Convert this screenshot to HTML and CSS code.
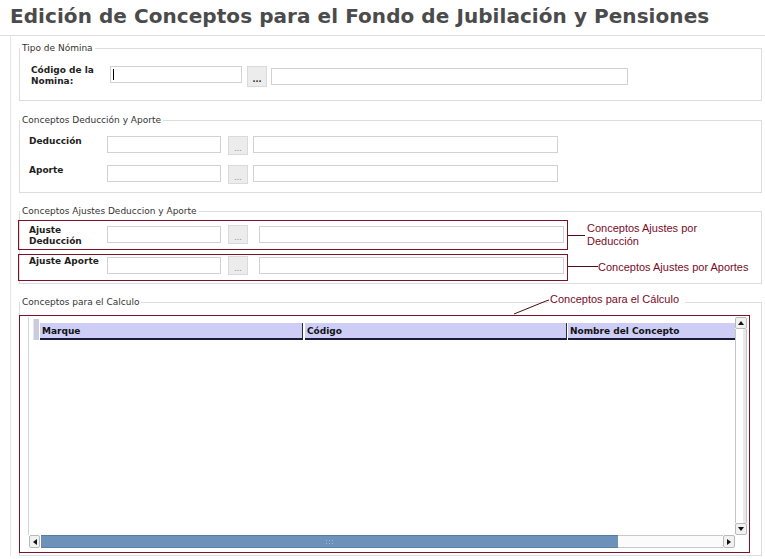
FILE: index.html
```html
<!DOCTYPE html>
<html lang="es">
<head>
    <meta charset="UTF-8">
    <meta name="viewport" content="width=device-width, initial-scale=1.0">
    <title>Edición de Conceptos</title>
    <link rel="stylesheet" href="styles.css">
</head>
<body>
    <h1 class="page-title">Edición de Conceptos para el Fondo de Jubilación y Pensiones</h1>

    <div class="page">
        <fieldset class="group group-nomina">
            <legend>Tipo de Nómina</legend>
            <div class="row row-nomina">
                <label class="row-label">Código de la<br>Nomina:</label>
                <span class="caret-wrap"><input type="text" class="field field-code"></span>
                <button class="pick pick-strong">...</button>
                <input type="text" class="field field-wide">
            </div>
        </fieldset>

        <fieldset class="group">
            <legend>Conceptos Deducción y Aporte</legend>
            <div class="row row-plain">
                <label class="row-label">Deducción</label>
                <input type="text" class="field field-code">
                <button class="pick">...</button>
                <input type="text" class="field field-name">
            </div>
            <div class="row row-plain">
                <label class="row-label">Aporte</label>
                <input type="text" class="field field-code">
                <button class="pick">...</button>
                <input type="text" class="field field-name">
            </div>
        </fieldset>

        <fieldset class="group group-adjust">
            <legend>Conceptos Ajustes Deduccion y Aporte</legend>
            <div class="adj-row">
                <div class="adj-box adj-box-tall">
                    <label class="row-label">Ajuste<br>Deducción</label>
                    <input type="text" class="field field-code">
                    <button class="pick">...</button>
                    <input type="text" class="field field-name">
                </div>
                <span class="lead"></span>
                <span class="note">Conceptos Ajustes por<br>Deducción</span>
            </div>
            <div class="adj-row">
                <div class="adj-box adj-box-short">
                    <label class="row-label">Ajuste Aporte</label>
                    <input type="text" class="field field-code">
                    <button class="pick">...</button>
                    <input type="text" class="field field-name">
                </div>
                <span class="lead lead-long"></span>
                <span class="note note-flush">Conceptos Ajustes por Aportes</span>
            </div>
        </fieldset>

        <fieldset class="group group-calc">
            <legend>Conceptos para el Calculo</legend>
            <div class="calc-box">
                <span class="calc-note">Conceptos para el Cálculo</span>
                <svg class="calc-pointer" width="42" height="17" viewBox="0 0 42 17">
                    <polyline points="4,15 36,2 39,1" fill="none" stroke="#4a0d17" stroke-width="1"/>
                </svg>

                <div class="grid">
                    <div class="grid-main">
                        <div class="grid-body">
                            <div class="grid-head">
                                <span class="head-stub"></span>
                                <span class="head-cell head-mark">Marque</span>
                                <span class="head-cell head-code">Código</span>
                                <span class="head-cell head-name">Nombre del Concepto</span>
                            </div>
                        </div>
                        <div class="vscroll">
                            <span class="sb-btn"><span class="tri tri-up"></span></span>
                            <span class="vtrack"></span>
                            <span class="sb-btn"><span class="tri tri-down"></span></span>
                        </div>
                    </div>
                    <div class="grid-foot">
                        <div class="hscroll">
                            <span class="sb-btn sb-btn-left"><span class="tri tri-left"></span></span>
                            <span class="hthumb"><span class="grip"></span></span>
                            <span class="htrack"></span>
                            <span class="sb-btn"><span class="tri tri-right"></span></span>
                        </div>
                        <span class="corner"></span>
                    </div>
                </div>
            </div>
        </fieldset>
    </div>
</body>
</html>
```

FILE: styles.css
```css
body {
    margin: 0;
    font-family: "DejaVu Sans", Verdana, sans-serif;
    font-size: 9px;
    color: #222;
    background-color: #fff;
}

.page-title {
    margin: 0;
    height: 36px;
    box-sizing: border-box;
    padding: 3px 10px 0;
    border-bottom: 1px solid #dedede;
    font-size: 20px;
    line-height: 26px;
    letter-spacing: 0.06px;
    color: #4b4b4b;
    white-space: nowrap;
}

.page {
    margin-left: 10px;
    border-left: 1px solid #e6e6e6;
    padding: 7px 3px 0 8px;
}

/* fieldsets */
.group {
    margin: 0 0 13px;
    padding: 0 0 8px;
    border: 1px solid #dcdcdc;
    min-width: 0;
}

.group legend {
    margin-left: 0;
    padding: 0 2px;
    font-size: 9px;
    line-height: 11px;
    color: #333;
}

.group-nomina {
    margin-bottom: 14px;
    padding-bottom: 13px;
}

.group-adjust {
    padding-bottom: 2px;
}

.group-calc {
    margin-bottom: 0;
    padding-bottom: 2px;
}

/* rows */
.row {
    display: flex;
    align-items: flex-start;
}

.row-nomina {
    padding: 11px 0 0 11px;
}

.row-nomina .row-label {
    width: 79px;
    line-height: 11px;
}

.row-plain {
    height: 19px;
    padding-left: 9px;
    margin-top: 10px;
}

.row-plain + .row-plain {
    margin-top: 10px;
}

.row-label {
    flex: none;
    width: 78px;
    font-weight: bold;
    line-height: 10px;
    color: #1e1e1e;
}

.field {
    flex: none;
    height: 17px;
    margin: 0;
    padding: 0 3px;
    box-sizing: border-box;
    border: 1px solid #d2d2d2;
    background-color: #fff;
    font-family: inherit;
    font-size: 9px;
}

.field-code {
    width: 114px;
}

.field-name {
    width: 305px;
    margin-left: 5px;
}

.row-nomina .field-code {
    width: 132px;
    margin-top: 1px;
}

.field-wide {
    width: 357px;
    margin-top: 3px;
    margin-left: 4px;
}

.caret-wrap {
    position: relative;
    display: block;
}

.caret-wrap::after {
    content: "";
    position: absolute;
    left: 3px;
    top: 4px;
    width: 1px;
    height: 11px;
    background-color: #000;
}

.pick {
    flex: none;
    width: 20px;
    height: 19px;
    margin: 0 0 0 7px;
    padding: 5px 0 0;
    box-sizing: border-box;
    border: 1px solid #dadada;
    background-color: #ececec;
    font-family: inherit;
    font-size: 8px;
    line-height: 9px;
    color: #8a8a8a;
}

.pick-strong {
    height: 21px;
    margin: 1px 0 0 5px;
    font-weight: bold;
    color: #222;
}

/* adjust rows with annotation */
.adj-row {
    display: flex;
    align-items: center;
    margin: 3px 0 0 -2px;
}

.adj-row + .adj-row {
    margin-top: 4px;
}

.adj-box {
    display: flex;
    align-items: flex-start;
    width: 550px;
    box-sizing: border-box;
    padding: 5px 3px 0 10px;
    border: 1px solid #7d1128;
}

.adj-box-tall {
    height: 30px;
}

.adj-box-tall .row-label {
    line-height: 11px;
    margin-top: -1px;
}

.adj-box-tall .pick {
    margin-top: -1px;
}

.adj-box-short {
    height: 27px;
    padding-top: 1px;
}

.adj-box-short .field {
    margin-top: 1px;
}

.adj-box .field-name {
    margin-left: 11px;
}

.lead {
    flex: none;
    width: 17px;
    height: 1px;
    background-color: #4a0d17;
}

.lead-long {
    width: 30px;
    margin-top: -3px;
}

.note {
    margin-left: 2px;
    font-family: "Liberation Sans", Arial, sans-serif;
    font-size: 11px;
    line-height: 13px;
    color: #7a0b1f;
}

.note-flush {
    margin-left: 0;
}

/* calculation grid */
.group-calc legend {
    margin-bottom: 7px;
}

.calc-box {
    position: relative;
    margin-left: -1px;
    width: 731px;
    box-sizing: border-box;
    padding: 1px 2px 4px 8px;
    border: 1px solid #7d1128;
}

.calc-note {
    position: absolute;
    left: 528px;
    top: -23px;
    padding: 0 6px 0 2px;
    background-color: #fff;
    font-family: "Liberation Sans", Arial, sans-serif;
    font-size: 11px;
    line-height: 13px;
    color: #7a0b1f;
}

.calc-pointer {
    position: absolute;
    left: 490px;
    top: -17px;
}

.grid-main {
    display: flex;
    height: 218px;
}

.grid-body {
    flex: 1;
    min-width: 0;
    padding: 2px 0 0 4px;
    border-left: 1px solid #d4d4d4;
    overflow: hidden;
}

.grid-head {
    display: flex;
    align-items: flex-end;
    white-space: nowrap;
}

.head-stub {
    flex: none;
    width: 6px;
    height: 21px;
    margin-right: 1px;
    box-sizing: border-box;
    border-left: 1px solid #e4e6ef;
    background-color: #c9ccdf;
}

.head-cell {
    flex: none;
    height: 17px;
    box-sizing: border-box;
    padding-left: 2px;
    border-bottom: 2px solid #1b1b3e;
    background-color: #cdcdf6;
    font-weight: bold;
    line-height: 16px;
    color: #111;
}

.head-mark {
    width: 263px;
    margin-right: 2px;
    border-right: 1px solid #2a2a4a;
}

.head-code {
    width: 262px;
    margin-right: 1px;
    border-right: 1px solid #2a2a4a;
}

.head-name {
    flex: 1;
}

/* scrollbars */
.vscroll {
    flex: none;
    display: flex;
    flex-direction: column;
    width: 12px;
}

.sb-btn {
    flex: none;
    display: flex;
    align-items: center;
    justify-content: center;
    width: 12px;
    height: 12px;
    box-sizing: border-box;
    border: 1px solid #b9b9b9;
    border-radius: 2px;
    background-color: #f1f1f1;
}

.sb-btn-left {
    width: 11px;
}

.vtrack {
    flex: 1;
    border-left: 1px solid #c4c4c4;
    border-right: 1px solid #c4c4c4;
    background: linear-gradient(to right, #fff 0, #fff 7px, #e9e9e9 7px);
}

.tri {
    width: 0;
    height: 0;
    border: 3px solid transparent;
}

.tri-up {
    border-bottom: 4px solid #111;
    border-top: 0;
}

.tri-down {
    border-top: 4px solid #111;
    border-bottom: 0;
}

.tri-left {
    border-right: 4px solid #111;
    border-left: 0;
}

.tri-right {
    border-left: 4px solid #111;
    border-right: 0;
}

.grid-foot {
    display: flex;
    height: 13px;
    padding-left: 1px;
}

.hscroll {
    flex: 1;
    display: flex;
    align-items: stretch;
}

.hscroll .sb-btn {
    height: 13px;
}

.hthumb {
    flex: none;
    display: flex;
    align-items: center;
    justify-content: center;
    width: 577px;
    margin-left: 1px;
    box-sizing: border-box;
    border-top: 1px solid #557aa3;
    border-bottom: 1px solid #5d82aa;
    background-color: #6d92ba;
}

.grip {
    width: 9px;
    height: 6px;
    background-image: radial-gradient(#9fb8d4 0.8px, transparent 1px);
    background-size: 3px 3px;
}

.htrack {
    flex: 1;
    border-top: 1px solid #c8c8c8;
    border-bottom: 1px solid #c8c8c8;
    background-color: #fbfbfb;
}

.corner {
    flex: none;
    width: 12px;
}
```
